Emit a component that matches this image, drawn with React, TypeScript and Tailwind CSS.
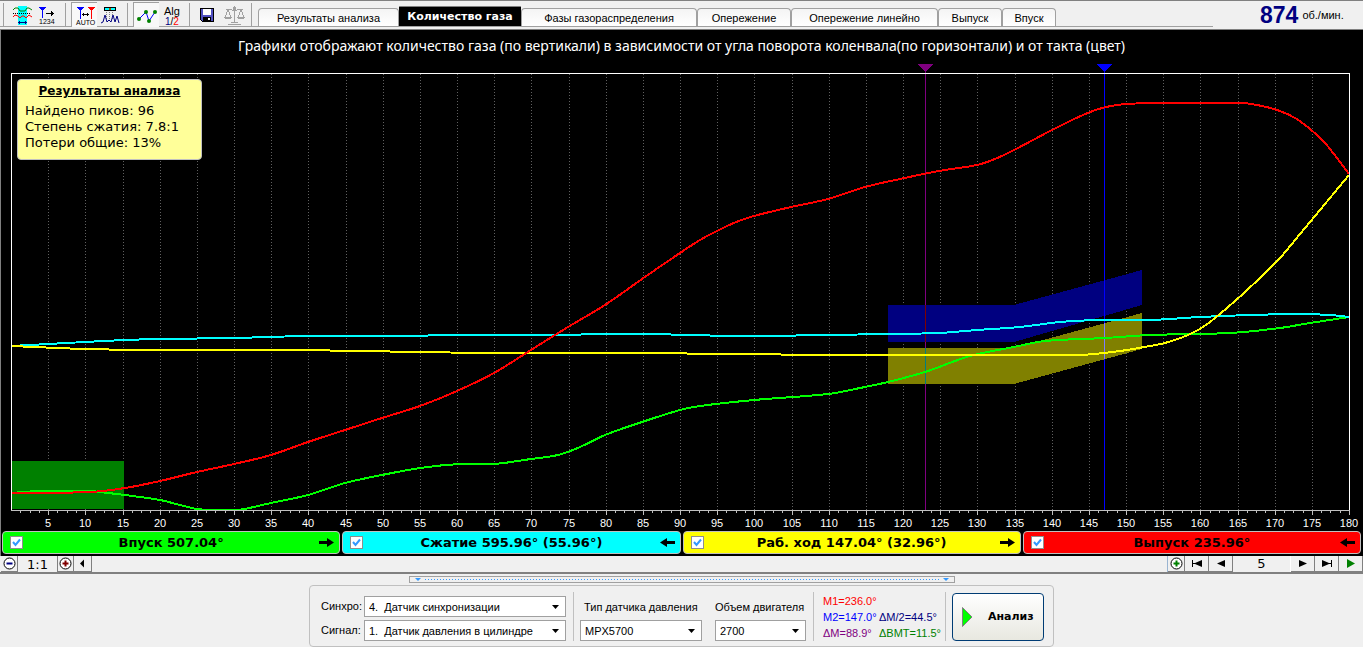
import { useState, type ReactNode } from "react";
import { clsx } from "clsx";

type Point = [number, number];

const PLOT = { left: 11, right: 1349, top: 43, bottom: 480 };

const tabs = [
  { label: "Результаты анализа", width: "w-[141px]" },
  { label: "Количество газа", width: "w-[122px]" },
  { label: "Фазы газораспределения", width: "w-[176px]" },
  { label: "Опережение", width: "w-[94px]" },
  { label: "Опережение линейно", width: "w-[147px]" },
  { label: "Выпуск", width: "w-[64px]" },
  { label: "Впуск", width: "w-[54px]" }
];

const phases = [
  { label: "Впуск 507.04°", color: "bg-[#00ff00]", forward: true },
  { label: "Сжатие 595.96° (55.96°)", color: "bg-[#00ffff]", forward: false },
  { label: "Раб. ход 147.04° (32.96°)", color: "bg-[#ffff00]", forward: true },
  { label: "Выпуск 235.96°", color: "bg-[#ff0000]", forward: false }
];

const curves: { color: string; points: Point[] }[] = [
  {
    color: "#00ff00",
    points: [
      [11, 463], [40, 461], [90, 461], [108, 463], [125, 465], [160, 470], [180, 475], [197, 479], [215, 480], [238, 480],
      [271, 473], [308, 465], [345, 453], [382, 445], [420, 438], [460, 434], [494, 434], [531, 429], [558, 425],
      [580, 417], [605, 405], [642, 392], [680, 380], [700, 376], [754, 370], [828, 364], [860, 358], [888, 352],
      [925, 342], [970, 326], [1014, 317], [1045, 311], [1105, 308], [1150, 305], [1230, 303], [1280, 298], [1310, 293], [1349, 287]
    ]
  },
  {
    color: "#00ffff",
    points: [
      [11, 316], [48, 314], [85, 312], [125, 310], [160, 309], [234, 308], [308, 306], [400, 306], [457, 305], [540, 305],
      [640, 304], [740, 306], [828, 305], [888, 304], [939, 303], [977, 300], [1020, 297], [1060, 292], [1100, 290],
      [1150, 290], [1200, 287], [1250, 285], [1300, 284], [1330, 285], [1349, 287]
    ]
  },
  {
    color: "#ffff00",
    points: [
      [11, 316], [85, 319], [160, 320], [300, 320], [480, 323], [640, 323], [828, 325], [1000, 325], [1080, 325],
      [1120, 321], [1150, 316], [1165, 313], [1188, 305], [1206, 295], [1235, 271], [1262, 246], [1280, 228],
      [1300, 204], [1320, 180], [1349, 145]
    ]
  },
  {
    color: "#ff0000",
    points: [
      [11, 463], [90, 462], [125, 458], [160, 451], [197, 442], [234, 434], [271, 425], [308, 412], [345, 400],
      [382, 388], [420, 376], [457, 361], [494, 343], [531, 320], [568, 297], [605, 275], [642, 249], [680, 223],
      [700, 210], [717, 201], [736, 192], [754, 186], [791, 177], [828, 169], [865, 157], [900, 149], [939, 141],
      [977, 135], [995, 129], [1014, 120], [1050, 101], [1070, 91], [1090, 82], [1106, 77], [1125, 74], [1165, 73],
      [1242, 73], [1262, 76], [1280, 81], [1295, 88], [1310, 99], [1325, 113], [1340, 132], [1349, 144]
    ]
  }
];

// Catmull-Rom through the measured points
function smooth(points: Point[]) {
  let d = `M${points[0][0]},${points[0][1]}`;
  for (let i = 0; i < points.length - 1; i++) {
    const a = points[i - 1] ?? points[i];
    const b = points[i];
    const c = points[i + 1];
    const e = points[i + 2] ?? c;
    const k = (c[0] - b[0]) / 3;
    const slopeB = (c[1] - a[1]) / (c[0] - a[0]);
    const slopeC = (e[1] - b[1]) / (e[0] - b[0]);
    d += `C${b[0] + k},${b[1] + slopeB * k} ${c[0] - k},${c[1] - slopeC * k} ${c[0]},${c[1]}`;
  }
  return d;
}

function angleToX(angle: number) {
  return Math.round(PLOT.left + (angle * (PLOT.right - PLOT.left)) / 180);
}

function GasChart() {
  const labels = Array.from({ length: 36 }, (_, i) => (i + 1) * 5);
  const ticks = Array.from({ length: 144 }, (_, i) => (i + 1) * 1.25);

  return (
    <svg viewBox="0 0 1363 501" className="block w-full" role="img" aria-label="Количество газа">
      <g shapeRendering="crispEdges" fill="none">
        {labels.slice(0, -1).map((a) => (
          <path key={a} d={`M${angleToX(a) + 0.5},44V480`} stroke="#606060" strokeDasharray="1 2" />
        ))}
        <path d="M12,431H124V479H12Z" fill="#008000" />
        <path d="M888,275H1014L1142,240V275L1014,312H888Z" fill="#000080" />
        <path d="M888,318H1014L1142,283V319L1014,354H888Z" fill="#808000" />
        <path d="M925.5,38V480" stroke="#800080" />
        <path d="M925.5,275V312" stroke="#800000" />
        <path d="M925.5,318V354" stroke="#008080" />
        <path d="M1104.5,38V480" stroke="#0000ff" />
        <path d="M1104.5,293V329" stroke="#7f7fff" />
        {curves.map((curve) => (
          <path key={curve.color} d={smooth(curve.points)} stroke={curve.color} strokeWidth="2" />
        ))}
        <path d="M11.5,480V43.5H1349.5V480" stroke="#fff" />
        <path d="M11,480.5H1350" stroke="#c0c0c0" />
        {ticks.map((a) => (
          <path key={a} d={`M${angleToX(a) + 0.5},481V${a % 5 === 0 ? 485 : 483}`} stroke="#c0c0c0" />
        ))}
        <path d="M917,34H933L925,42Z" fill="#800080" />
        <path d="M1096,34H1112L1104,42Z" fill="#0000ff" />
      </g>
      <g fill="#fff" textAnchor="middle" className="font-['Liberation_Sans'] text-[11px]">
        {labels.map((a) => (
          <text key={a} x={angleToX(a)} y="497">{a}</text>
        ))}
      </g>
    </svg>
  );
}

function ToolButton({ label, pressed, children }: { label: string; pressed?: boolean; children: ReactNode }) {
  return (
    <button
      type="button"
      aria-label={label}
      className={clsx(
        "flex h-[25px] w-[26px] items-center justify-center",
        pressed && "border-l border-t border-[#a0a0a0] bg-[#f8f8f8]"
      )}
    >
      <svg width="24" height="24" viewBox="0 0 24 24" className="shrink-0" shapeRendering="crispEdges" fill="none">
        {children}
      </svg>
    </button>
  );
}

function Separator() {
  return <div className="ml-1 mr-[5px] h-6 w-px bg-[#a0a0a0]" />;
}

function Toolbar() {
  return (
    <div className="flex shrink-0 items-center pt-px">
      <div className="ml-[3px] mr-[5px] h-6 w-px bg-[#a0a0a0]" />
      <div className="flex">
        <ToolButton label="Фазы">
          <path d="M8,3H17V22H8Z" fill="#00ffff" />
          <path d="M3,7L5,5L8,5L10,8H15L17,5L19,5L22,7" stroke="#008000" shapeRendering="auto" />
          <path d="M3,10.500H21" stroke="#000" strokeDasharray="1 1" />
          <path d="M3,14L5,12L8,13L10,15L12,13L14,13L16,15L19,12L22,14" stroke="#ff0000" shapeRendering="auto" />
          <path d="M8,19.500H17M9.500,18V21M15.500,18V21" stroke="#000080" />
        </ToolButton>
        <ToolButton label="Нумерация">
          <path d="M3,4H10L7,8V15H6V8Z" fill="#0000ff" />
          <path d="M10,10.500H18M15.500,8V13M16.500,9V12" stroke="#000" />
          <text x="3" y="21" fill="#000" className="font-['Liberation_Sans'] text-[7px]">1234</text>
        </ToolButton>
      </div>
      <Separator />
      <div className="flex">
        <ToolButton label="Авто" pressed>
          <path d="M4,4H11L8,8V16H7V8Z" fill="#0000ff" />
          <path d="M15,4H22L19,8V16H18V8Z" fill="#ff0000" />
          <path d="M9,11.500H16M10.500,10V13M14.500,10V13" stroke="#000" />
          <text x="3" y="22" fill="#000" className="font-['Liberation_Sans'] text-[7px]">AUTO</text>
        </ToolButton>
        <ToolButton label="Пики">
          <path d="M6.500,4.500H17.500V7.500H6.500Z" fill="#00ffff" stroke="#000" />
          <path d="M11,5H13V7H11Z" fill="#a06000" />
          <path d="M8.500,9V16M11.500,9V19M14.500,9V16" stroke="#808080" strokeDasharray="1 1" />
          <path d="M3,20L5,19L7,12L9,19L11,17L13,19L15,12L17,19L19,13L21,20" stroke="#000080" shapeRendering="auto" />
        </ToolButton>
      </div>
      <Separator />
      <div className="flex">
        <ToolButton label="График" pressed>
          <path d="M4,16L11,9L14,18L20,9" stroke="#0000ff" shapeRendering="auto" />
          <g fill="#008000" shapeRendering="auto">
            <circle cx="4" cy="16" r="2" />
            <circle cx="11" cy="9" r="2" />
            <circle cx="14" cy="18" r="2" />
            <circle cx="20" cy="9" r="2" />
          </g>
        </ToolButton>
        <ToolButton label="Алгоритм">
          <text x="4" y="12" fill="#000" className="font-['Liberation_Sans'] text-[11px]">Alg</text>
          <text x="5" y="22" className="font-['Liberation_Sans'] text-[10px]">
            <tspan fill="#000080">1</tspan>
            <tspan fill="#000">/</tspan>
            <tspan fill="#ff0000">2</tspan>
          </text>
        </ToolButton>
      </div>
      <Separator />
      <div className="flex">
        <ToolButton label="Сохранить">
          <path d="M4.500,5.500H17.500V18.500H6.500L4.500,16.500Z" fill="#5050c0" stroke="#000" />
          <path d="M7,6H15V12H7Z" fill="#fff" />
          <path d="M7,14H15V18H7Z" fill="#000" />
          <path d="M12,15H14V17H12Z" fill="#fff" />
        </ToolButton>
        <ToolButton label="Сравнить">
          <path
            d="M12.500,3V20M6,21.500H19M9,19.500H16M4,6.500H10M15,6.500H21M10,7.500H15M6,7L3,14M6,7L9,14M2,14.500H10M3,15.500H9M19,7L16,14M19,7L22,14M15,14.500H23M16,15.500H22"
            stroke="#a0a0a0"
          />
          <path d="M11,4H14V8H11Z" fill="#a0a0a0" />
        </ToolButton>
      </div>
      <div className="ml-1 mr-[6px] h-6 w-px bg-[#a0a0a0]" />
    </div>
  );
}

function TabBar() {
  const [active, setActive] = useState("Количество газа");

  return (
    <div role="tablist" className="flex items-end self-stretch">
      {tabs.map((tab) => (
        <button
          key={tab.label}
          type="button"
          role="tab"
          aria-selected={tab.label === active}
          onClick={() => setActive(tab.label)}
          className={clsx(
            "whitespace-nowrap text-center text-[11px]",
            tab.width,
            tab.label === active
              ? "h-5 rounded-t-[1px] border-t border-[#808080] bg-black pt-px font-['DejaVu_Sans'] font-bold text-white"
              : "h-[18px] rounded-t border border-b-0 border-[#a0a0a0] bg-linear-to-b from-[#f4f4f4] to-white pt-px leading-4"
          )}
        >
          {tab.label}
        </button>
      ))}
    </div>
  );
}

function Arrow({ forward }: { forward: boolean }) {
  return (
    <svg width="15" height="9" viewBox="0 0 15 9" className={clsx(!forward && "rotate-180")} aria-hidden="true">
      <path d="M0,3H8V0L15,4.500L8,9V6H0Z" fill="#000" />
    </svg>
  );
}

function PhaseBar() {
  return (
    <div className="grid grid-cols-4 gap-[2px] px-[2px] pb-[2px]">
      {phases.map((phase) => (
        <label
          key={phase.label}
          className={clsx("flex h-[23px] items-center rounded border border-[#c0c0c0] pl-[7px] pr-[5px]", phase.color)}
        >
          <span className="relative flex">
            <input type="checkbox" defaultChecked className="peer size-[13px] appearance-none border border-[#8e8f8f] bg-white" />
            <svg viewBox="0 0 13 13" className="pointer-events-none absolute inset-0 hidden peer-checked:block" aria-hidden="true">
              <path d="M3,6L5.500,9L10,3.500" fill="none" stroke="#3399ff" strokeWidth="2" />
            </svg>
          </span>
          <span className="flex-1 text-center font-['DejaVu_Sans'] text-[13px] font-bold leading-5">{phase.label}</span>
          <Arrow forward={phase.forward} />
        </label>
      ))}
    </div>
  );
}

function ZoomIcon({ plus, color }: { plus?: boolean; color: string }) {
  return (
    <svg width="13" height="13" viewBox="0 0 13 13" className="shrink-0" aria-hidden="true">
      <circle cx="6.500" cy="6.500" r="5.500" fill="#fff" stroke="#000" />
      <path d={plus ? "M3.500,6.500H9.500M6.500,3.500V9.500" : "M3.500,6.500H9.500"} stroke={color} strokeWidth="2" />
    </svg>
  );
}

function NavButton({ label, width, children }: { label: string; width: string; children: ReactNode }) {
  return (
    <button
      type="button"
      aria-label={label}
      className={clsx("flex h-4 shrink-0 items-center justify-center border-b border-r border-[#808080] bg-[#f0f0f0]", width)}
    >
      {children}
    </button>
  );
}

function NavIcon({ d, color = "#000" }: { d: string; color?: string }) {
  return (
    <svg width="12" height="9" viewBox="0 0 12 9" aria-hidden="true">
      <path d={d} fill={color} />
    </svg>
  );
}

function NavBar() {
  return (
    <div className="flex h-[18px] items-start border-b-2 border-[#808080] bg-[#f0f0f0] pl-px font-['DejaVu_Sans'] text-[13px] leading-4">
      <NavButton label="Уменьшить" width="w-[17px]"><ZoomIcon color="#000080" /></NavButton>
      <output className="h-4 w-10 shrink-0 border-r border-[#808080] pt-px text-center">1:1</output>
      <NavButton label="Увеличить" width="w-4"><ZoomIcon plus color="#800000" /></NavButton>
      <NavButton label="Влево" width="w-[18px]"><NavIcon d="M3,4.500L7,0.500V8.500Z" /></NavButton>
      <div className="h-4 min-w-0 flex-1 border-r border-[#99b4d1]" />
      <NavButton label="Добавить" width="w-[17px]"><ZoomIcon plus color="#008000" /></NavButton>
      <NavButton label="Первый" width="w-6"><NavIcon d="M1,1H2V8H1ZM2,4H4L11,1V8L4,5H2Z" /></NavButton>
      <NavButton label="Предыдущий" width="w-6"><NavIcon d="M2,4.500L10,1V8Z" /></NavButton>
      <output className="h-4 w-[58px] shrink-0 border-r border-white text-center">5</output>
      <NavButton label="Следующий" width="w-6"><NavIcon d="M10,4.500L2,1V8Z" /></NavButton>
      <NavButton label="Последний" width="w-6"><NavIcon d="M10,1H11V8H10ZM10,4H8L1,1V8L8,5H10Z" /></NavButton>
      <NavButton label="Пуск" width="w-6"><NavIcon d="M10,4.500L2,0V9Z" color="#008000" /></NavButton>
    </div>
  );
}

function Select({ id, value, width }: { id: string; value: string; width: string }) {
  return (
    <div className={clsx("relative", width)}>
      <select id={id} className="block h-[21px] w-full appearance-none whitespace-pre border border-[#a0a0a0] bg-white pl-1 pr-5 text-[11px] leading-4">
        <option>{value}</option>
      </select>
      <svg width="7" height="4" viewBox="0 0 7 4" className="pointer-events-none absolute right-[7px] top-[9px]" aria-hidden="true">
        <path d="M0,0H7L3.500,4Z" fill="#000" />
      </svg>
    </div>
  );
}

function Splitter() {
  return (
    <div className="mx-auto flex h-[7px] w-[546px] items-center gap-1 border border-[#a0a0a0] px-[5px]">
      <svg width="6" height="3" aria-hidden="true"><path d="M0,0H6L3,3Z" fill="#3399ff" /></svg>
      <div className="h-px flex-1 bg-[repeating-linear-gradient(90deg,#3399ff_0_1px,transparent_1px_3px)]" />
      <svg width="6" height="3" aria-hidden="true"><path d="M0,0H6L3,3Z" fill="#3399ff" /></svg>
    </div>
  );
}

function ControlPanel() {
  return (
    <div className="mx-auto flex w-[745px] items-end rounded border border-[#c0c0c0] px-[9px] pb-[5px] pt-[6px]">
      <div className="grid grid-cols-[43px_202px] items-center gap-y-[3px] pl-[2px]">
        <label htmlFor="sync" className="text-[11px]">Синхро:</label>
        <Select id="sync" width="w-[202px]" value={"4.\u00a0\u00a0Датчик синхронизации"} />
        <label htmlFor="signal" className="text-[11px]">Сигнал:</label>
        <Select id="signal" width="w-[202px]" value={"1.\u00a0\u00a0Датчик давления в цилиндре"} />
      </div>
      <div className="ml-[7px] mr-[6px] h-[49px] w-px self-center bg-[#c0c0c0]" />
      <div className="flex flex-col gap-[5px]">
        <label htmlFor="sensor" className="w-[122px] whitespace-nowrap pl-1 text-[11px] leading-4">Тип датчика давления</label>
        <Select id="sensor" width="w-[122px]" value="MPX5700" />
      </div>
      <div className="flex flex-col gap-[5px] pl-[13px]">
        <label htmlFor="volume" className="w-[91px] whitespace-nowrap text-[11px] leading-4">Объем двигателя</label>
        <Select id="volume" width="w-[91px]" value="2700" />
      </div>
      <div className="ml-[7px] h-[49px] w-px self-center bg-[#c0c0c0]" />
      <div className="grid flex-1 grid-cols-[56px_1fr] whitespace-nowrap pl-[9px] text-[11px] leading-4">
        <span className="col-span-2 text-[#ff0000]">M1=236.0°</span>
        <span className="text-[#0000ff]">M2=147.0°</span>
        <span className="text-[#000080]">ΔM/2=44.5°</span>
        <span className="text-[#800080]">ΔM=88.9°</span>
        <span className="text-[#008000]">ΔВМТ=11.5°</span>
      </div>
      <div className="mr-[6px] h-[49px] w-px self-center bg-[#c0c0c0]" />
      <button
        type="button"
        className="flex h-12 w-[92px] items-center gap-4 rounded-sm border border-[#003c74] bg-linear-to-b from-white to-[#e8e8e0] pl-[9px] font-['DejaVu_Sans'] text-[11px] font-bold"
      >
        <svg width="10" height="20" viewBox="0 0 10 20" aria-hidden="true">
          <path d="M0.500,0.500L10,10L0.500,19.500Z" fill="#00ff00" stroke="#808080" />
        </svg>
        Анализ
      </button>
    </div>
  );
}

export default function App() {
  return (
    <div className="min-h-screen bg-[#f0f0f0] font-['Liberation_Sans',sans-serif] text-[12px] text-black">
      <header className="flex h-[30px] items-stretch border-b border-[#808080]">
        <div className="flex h-[27px] flex-1 items-start border-b border-t border-[#a0a0a0] border-t-[#808080]">
          <Toolbar />
          <TabBar />
        </div>
        <div className="flex h-[29px] w-[150px] items-center gap-1 border-t border-[#808080] pl-[47px]">
          <span className="text-[23px] font-bold text-[#000080]">874</span>
          <span className="pt-px text-[11px]">об./мин.</span>
        </div>
      </header>
      <main>
        <section className="relative bg-black shadow-[inset_1px_0_0_#808080]">
          <h1 className="absolute inset-x-0 top-2 text-center font-['Noto_Sans'] text-[14px] leading-4 text-white">
            Графики отображают количество газа (по вертикали) в зависимости от угла поворота коленвала(по горизонтали) и от такта (цвет)
          </h1>
          <GasChart />
          <aside className="absolute left-[17px] top-[49px] h-[81px] w-[185px] rounded border border-[#c0c0c0] bg-[#ffff99] px-[7px] pt-[3px] font-['DejaVu_Sans'] text-[13px] leading-4">
            <h2 className="mb-1 text-center text-[12px] font-bold underline">Результаты анализа</h2>
            <p>Найдено пиков: 96</p>
            <p>Степень сжатия: 7.8:1</p>
            <p>Потери общие: 13%</p>
          </aside>
          <PhaseBar />
        </section>
        <NavBar />
      </main>
      <footer className="flex flex-col gap-[2px] pt-[2px]">
        <Splitter />
        <ControlPanel />
      </footer>
    </div>
  );
}
